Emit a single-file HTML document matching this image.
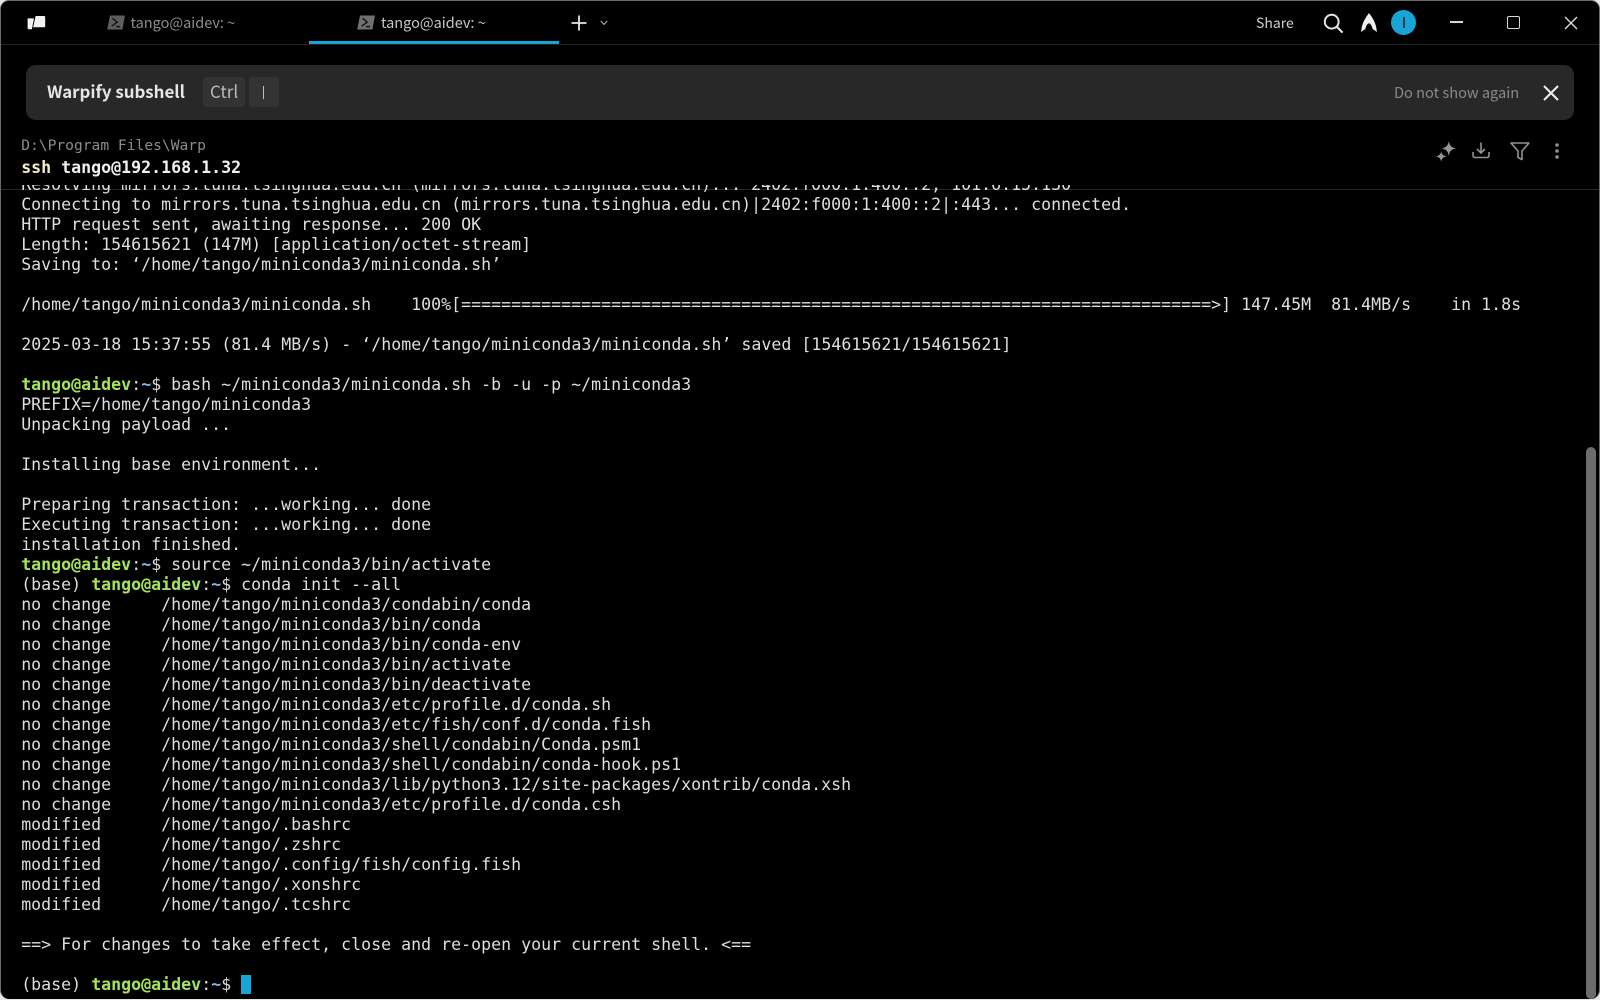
<!DOCTYPE html>
<html><head><meta charset="utf-8"><style>
*{box-sizing:border-box}
html,body{margin:0;padding:0;width:1600px;height:1000px;overflow:hidden;background:#e6e6e6}
#win{position:absolute;left:0;top:0;width:1600px;height:999px;background:#000;border-radius:9px;border:1px solid #6a6a6a;border-bottom:0;overflow:hidden}
.ui{position:absolute;font-family:"Noto Sans CJK SC","Liberation Sans",sans-serif;white-space:pre;line-height:20px}
.t{position:absolute;left:21.2px;margin-top:1px;font:16.6px/20px "DejaVu Sans Mono",monospace;letter-spacing:.009px;color:#dedede;white-space:pre;height:20px}
.t b{color:#a6e35c;font-weight:bold}.t i{color:#8ab8ea;font-style:normal;font-weight:bold}
svg{position:absolute;overflow:visible}
</style></head><body>
<div id="win"><div style="position:absolute;left:-1px;top:-1px;width:1600px;height:1000px">
<div style="position:absolute;left:0;top:189px;width:1600px;height:1px;background:#2a2a2a"></div>
<div class="t" style="top:174px">Resolving mirrors.tuna.tsinghua.edu.cn (mirrors.tuna.tsinghua.edu.cn)... 2402:f000:1:400::2, 101.6.15.130</div>
<div class="t" style="top:194px">Connecting to mirrors.tuna.tsinghua.edu.cn (mirrors.tuna.tsinghua.edu.cn)|2402:f000:1:400::2|:443... connected.</div>
<div class="t" style="top:214px">HTTP request sent, awaiting response... 200 OK</div>
<div class="t" style="top:234px">Length: 154615621 (147M) [application/octet-stream]</div>
<div class="t" style="top:254px">Saving to: ‘/home/tango/miniconda3/miniconda.sh’</div>
<div class="t" style="top:294px">/home/tango/miniconda3/miniconda.sh    100%[===========================================================================&gt;] 147.45M  81.4MB/s    in 1.8s</div>
<div class="t" style="top:334px;letter-spacing:.012px">2025-03-18 15:37:55 (81.4 MB/s) - ‘/home/tango/miniconda3/miniconda.sh’ saved [154615621/154615621]</div>
<div class="t" style="top:374px"><b>tango@aidev</b>:<i>~</i>$ bash ~/miniconda3/miniconda.sh -b -u -p ~/miniconda3</div>
<div class="t" style="top:394px">PREFIX=/home/tango/miniconda3</div>
<div class="t" style="top:414px">Unpacking payload ...</div>
<div class="t" style="top:454px">Installing base environment...</div>
<div class="t" style="top:494px">Preparing transaction: ...working... done</div>
<div class="t" style="top:514px">Executing transaction: ...working... done</div>
<div class="t" style="top:534px">installation finished.</div>
<div class="t" style="top:554px"><b>tango@aidev</b>:<i>~</i>$ source ~/miniconda3/bin/activate</div>
<div class="t" style="top:574px">(base) <b>tango@aidev</b>:<i>~</i>$ conda init --all</div>
<div class="t" style="top:594px">no change     /home/tango/miniconda3/condabin/conda</div>
<div class="t" style="top:614px">no change     /home/tango/miniconda3/bin/conda</div>
<div class="t" style="top:634px">no change     /home/tango/miniconda3/bin/conda-env</div>
<div class="t" style="top:654px">no change     /home/tango/miniconda3/bin/activate</div>
<div class="t" style="top:674px">no change     /home/tango/miniconda3/bin/deactivate</div>
<div class="t" style="top:694px">no change     /home/tango/miniconda3/etc/profile.d/conda.sh</div>
<div class="t" style="top:714px">no change     /home/tango/miniconda3/etc/fish/conf.d/conda.fish</div>
<div class="t" style="top:734px">no change     /home/tango/miniconda3/shell/condabin/Conda.psm1</div>
<div class="t" style="top:754px">no change     /home/tango/miniconda3/shell/condabin/conda-hook.ps1</div>
<div class="t" style="top:774px">no change     /home/tango/miniconda3/lib/python3.12/site-packages/xontrib/conda.xsh</div>
<div class="t" style="top:794px">no change     /home/tango/miniconda3/etc/profile.d/conda.csh</div>
<div class="t" style="top:814px">modified      /home/tango/.bashrc</div>
<div class="t" style="top:834px">modified      /home/tango/.zshrc</div>
<div class="t" style="top:854px">modified      /home/tango/.config/fish/config.fish</div>
<div class="t" style="top:874px">modified      /home/tango/.xonshrc</div>
<div class="t" style="top:894px">modified      /home/tango/.tcshrc</div>
<div class="t" style="top:934px">==&gt; For changes to take effect, close and re-open your current shell. &lt;==</div>
<div class="t" style="top:974px">(base) <b>tango@aidev</b>:<i>~</i>$ </div>
<div style="position:absolute;left:241px;top:975px;width:10px;height:19px;background:#17a5d6"></div>
<div style="position:absolute;left:1586px;top:447px;width:10px;height:552px;background:#6c6c6c;border-radius:5px"></div>

<div style="position:absolute;left:0;top:0;width:1600px;height:185px;background:#000"></div>
<div style="position:absolute;left:0;top:0;width:1600px;height:45px;border-bottom:1px solid #232323"></div>

<svg style="left:27px;top:15px" width="19" height="15" viewBox="0 0 19 15"><path d="M.6 3.4H7L4.9 14.2H1.6A1 1 0 0 1 .6 13.2Z" fill="#f2f2f2"/><path d="M8.6 1H17.2A1 1 0 0 1 18.2 2V11.2A1 1 0 0 1 17.2 12.2H6.2Z" fill="#f2f2f2"/></svg>

<svg style="left:107px;top:15px" width="18" height="15" viewBox="0 0 18 15"><path d="M3 .5H18L15.4 14.5H.2Z" fill="#5e5e5e"/><path d="M5.5 3.2L10.2 7.2L4.6 11.2M9 11.6H13.2" fill="none" stroke="#151515" stroke-width="1.5"/></svg>
<div class="ui" style="left:130.5px;top:13px;font-size:14.5px;color:#8e8e8e">tango@aidev: ~</div>

<svg style="left:357px;top:15px" width="18" height="15" viewBox="0 0 18 15"><path d="M3 .5H18L15.4 14.5H.2Z" fill="#707070"/><path d="M5.5 3.2L10.2 7.2L4.6 11.2M9 11.6H13.2" fill="none" stroke="#151515" stroke-width="1.5"/></svg>
<div class="ui" style="left:381px;top:13px;font-size:14.5px;color:#c8c8c8">tango@aidev: ~</div>
<div style="position:absolute;left:309px;top:41px;width:250px;height:3px;background:#17a5d6"></div>

<svg style="left:571px;top:15px" width="16" height="16" viewBox="0 0 16 16"><path d="M8 .5V15.5M.5 8H15.5" stroke="#e8e8e8" stroke-width="1.8" fill="none"/></svg>
<svg style="left:600px;top:20px" width="8" height="6" viewBox="0 0 8 6"><path d="M.8 1L4 4.4L7.2 1" stroke="#aaa" stroke-width="1.1" fill="none"/></svg>

<div class="ui" style="left:1256px;top:13px;font-size:14px;color:#cfcfcf">Share</div>
<svg style="left:1323px;top:13px" width="21" height="21" viewBox="0 0 21 21"><circle cx="8.7" cy="8.7" r="6.9" fill="none" stroke="#e4e4e4" stroke-width="2"/><path d="M13.8 13.8L19.6 19.6" stroke="#e4e4e4" stroke-width="2.1"/></svg>
<svg style="left:1361px;top:13px" width="16" height="20" viewBox="0 0 16 20"><path d="M8 0C10.5 3.5 15.8 10 15.8 19.4C14.6 17.8 13 16.8 11.8 16.4C11 13.2 9.6 10.4 8 10.4C6.4 10.4 5 13.2 4.2 16.4C3 16.8 1.4 17.8.2 19.4C.2 10 5.5 3.5 8 0Z" fill="#f0f0f0"/></svg>
<div style="position:absolute;left:1391px;top:10px;width:25px;height:25px;border-radius:50%;background:#17a5d6"></div>
<div style="position:absolute;left:1403px;top:17px;width:1.5px;height:11px;background:#0c3d52"></div>
<div style="position:absolute;left:1450px;top:21px;width:13px;height:1.5px;background:#d8d8d8"></div>
<div style="position:absolute;left:1507px;top:15.5px;width:13px;height:13px;border:1.5px solid #d8d8d8;border-radius:2px"></div>
<svg style="left:1564px;top:15.5px" width="14" height="14" viewBox="0 0 14 14"><path d="M1 1L13 13M13 1L1 13" stroke="#e0e0e0" stroke-width="1.3" fill="none"/></svg>

<div style="position:absolute;left:26px;top:65px;width:1548px;height:55px;background:#282828;border-radius:10px"></div>
<div class="ui" style="left:47px;top:81px;font-size:16.9px;font-weight:bold;color:#e6e6e6">Warpify subshell</div>
<div style="position:absolute;left:203px;top:77px;width:42px;height:30px;background:#333;border-radius:4px"></div>
<div style="position:absolute;left:249px;top:77px;width:30px;height:30px;background:#333;border-radius:4px"></div>
<div class="ui" style="left:210px;top:81px;font-size:17px;color:#bcbcbc">Ctrl</div>
<div style="position:absolute;left:263px;top:86px;width:1.2px;height:13px;background:#c0c0c0"></div>
<div class="ui" style="left:1394px;top:83px;font-size:14.6px;color:#8a8a8a">Do not show again</div>
<svg style="left:1543px;top:85px" width="16" height="16" viewBox="0 0 16 16"><path d="M1 1L15 15M15 1L1 15" stroke="#efefef" stroke-width="2" fill="none"/></svg>

<div class="t" style="top:135px;font-size:14.6px;color:#8c8c8c">D:\Program Files\Warp</div>
<div class="t" style="top:157px;font-weight:bold;color:#f0f0f0"><span style="color:#f3efc0">ssh</span> tango@192.168.1.32</div>

<svg style="left:1436px;top:141px" width="20" height="21" viewBox="0 0 20 21"><path d="M12.8 0C13.4 4.4 15.4 6.6 20 7.4C15.4 8.2 13.4 10.4 12.8 15.2C12.2 10.4 10 8.2 5.6 7.4C10 6.6 12.2 4.4 12.8 0Z" fill="#959595"/><path d="M5.2 10.4C5.6 13 7 14.6 10.2 15.4C7 16.2 5.6 17.8 5.2 21C4.8 17.8 3.4 16.2 0 15.4C3.4 14.6 4.8 13 5.2 10.4Z" fill="#959595"/></svg>
<svg style="left:1472px;top:142px" width="18" height="17" viewBox="0 0 18 17"><path d="M9 .5V10.5M5 7L9 11L13 7" fill="none" stroke="#929292" stroke-width="1.6"/><path d="M1 10V13.5A2 2 0 0 0 3 15.5H15A2 2 0 0 0 17 13.5V10" fill="none" stroke="#929292" stroke-width="1.6"/></svg>
<svg style="left:1510px;top:142px" width="20" height="19" viewBox="0 0 20 19"><path d="M1 1H19L12 9V17.5L8 15.5V9Z" fill="none" stroke="#929292" stroke-width="1.6" stroke-linejoin="round"/></svg>
<svg style="left:1554px;top:142px" width="6" height="18" viewBox="0 0 6 18"><circle cx="3" cy="3" r="1.8" fill="#929292"/><circle cx="3" cy="9" r="1.8" fill="#929292"/><circle cx="3" cy="15" r="1.8" fill="#929292"/></svg>
</div></div>
</body></html>
